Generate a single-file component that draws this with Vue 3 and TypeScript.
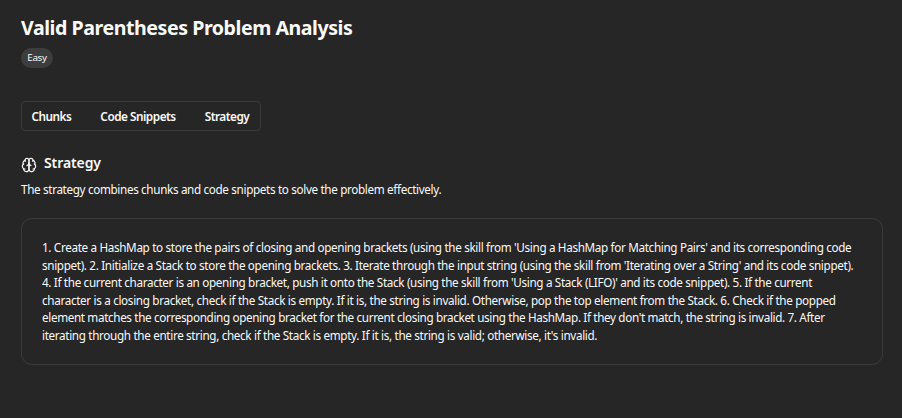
<script setup lang="ts">
const tabs: string[] = ['Chunks', 'Code Snippets', 'Strategy']

const lines: string[] = [
  "1. Create a HashMap to store the pairs of closing and opening brackets (using the skill from 'Using a HashMap for Matching Pairs' and its corresponding code",
  "snippet). 2. Initialize a Stack to store the opening brackets. 3. Iterate through the input string (using the skill from 'Iterating over a String' and its code snippet).",
  "4. If the current character is an opening bracket, push it onto the Stack (using the skill from 'Using a Stack (LIFO)' and its code snippet). 5. If the current",
  'character is a closing bracket, check if the Stack is empty. If it is, the string is invalid. Otherwise, pop the top element from the Stack. 6. Check if the popped',
  "element matches the corresponding opening bracket for the current closing bracket using the HashMap. If they don't match, the string is invalid. 7. After",
  "iterating through the entire string, check if the Stack is empty. If it is, the string is valid; otherwise, it's invalid.",
]
</script>

<template>
  <main class="page">
    <h1 class="title">Valid Parentheses Problem Analysis</h1>
    <span class="badge">Easy</span>
    <nav class="tabs">
      <button v-for="tab in tabs" :key="tab" class="tab" type="button">{{ tab }}</button>
    </nav>
    <div class="heading">
      <svg class="brain" viewBox="0 0 24 24" fill="none" stroke="currentColor" stroke-width="1.8" stroke-linecap="round" stroke-linejoin="round">
        <path d="M12 5a3 3 0 1 0-5.997.125 4 4 0 0 0-2.526 5.77 4 4 0 0 0 .556 6.588A4 4 0 1 0 12 18Z" />
        <path d="M12 5a3 3 0 1 1 5.997.125 4 4 0 0 1 2.526 5.77 4 4 0 0 1-.556 6.588A4 4 0 1 1 12 18Z" />
        <path d="M15 13a4.5 4.5 0 0 1-3-4 4.5 4.5 0 0 1-3 4" />
        <path d="M17.599 6.5a3 3 0 0 0 .399-1.375M6.003 5.125A3 3 0 0 0 6.401 6.5M3.477 10.896a4 4 0 0 1 .585-.396M19.938 10.5a4 4 0 0 1 .585.396M6 18a4 4 0 0 1-1.967-.516M19.967 17.484A4 4 0 0 1 18 18" />
      </svg>
      <h2 class="subtitle">Strategy</h2>
    </div>
    <p class="lead">The strategy combines chunks and code snippets to solve the problem effectively.</p>
    <section class="card">
      <p class="body">
        <span v-for="(line, i) in lines" :key="i" class="line">{{ line }}</span>
      </p>
    </section>
  </main>
</template>

<style>
body {
  background: #262626;
}
</style>

<style scoped>
.page {
  box-sizing: border-box;
  height: 418px;
  padding: 14px 19px 0 21px;
  display: flex;
  flex-direction: column;
  align-items: flex-start;
  background: #262626;
  color: #fafafa;
  font-family: 'Segoe UI', 'Noto Sans', 'Open Sans', sans-serif;
}
.title {
  margin: 0;
  font-size: 19.6px;
  line-height: 28px;
  font-weight: 700;
  letter-spacing: -0.455px;
  white-space: nowrap;
}
.badge {
  box-sizing: border-box;
  width: 32px;
  height: 20px;
  margin-top: 6px;
  border-radius: 10px;
  background: #3d3d3d;
  font-size: 9.8px;
  line-height: 20px;
  text-align: center;
  letter-spacing: -0.3px;
}
.tabs {
  box-sizing: border-box;
  display: flex;
  gap: 29px;
  width: 240px;
  height: 30px;
  margin-top: 33px;
  padding: 0 9.5px;
  border: 1px solid #3b3b3b;
  border-radius: 4px;
}
.tab {
  padding: 0;
  border: 0;
  background: transparent;
  color: #fafafa;
  font-family: inherit;
  font-size: 11.8px;
  font-weight: 600;
  letter-spacing: -0.5px;
  white-space: nowrap;
}
.heading {
  display: flex;
  align-items: center;
  height: 24px;
  margin-top: 20px;
}
.brain {
  width: 16px;
  height: 16px;
  margin: 4px 7px 0 0;
}
.subtitle {
  margin: 0;
  font-size: 14px;
  line-height: 24px;
  font-weight: 600;
  letter-spacing: -0.1px;
}
.lead {
  margin: 5px 0 0;
  font-size: 11.7px;
  line-height: 18px;
  letter-spacing: -0.34px;
  white-space: nowrap;
}
.card {
  box-sizing: border-box;
  width: 862px;
  height: 147px;
  margin-top: 20px;
  padding: 20px;
  border: 1px solid #3b3b3b;
  border-radius: 11px;
}
.body {
  margin: 0;
  font-size: 11.7px;
  line-height: 17.5px;
  letter-spacing: -0.334px;
}
.line {
  display: block;
  width: max-content;
  white-space: nowrap;
}
.line:nth-child(4) {
  letter-spacing: -0.328px;
}
.line:nth-child(5) {
  letter-spacing: -0.354px;
}
</style>
